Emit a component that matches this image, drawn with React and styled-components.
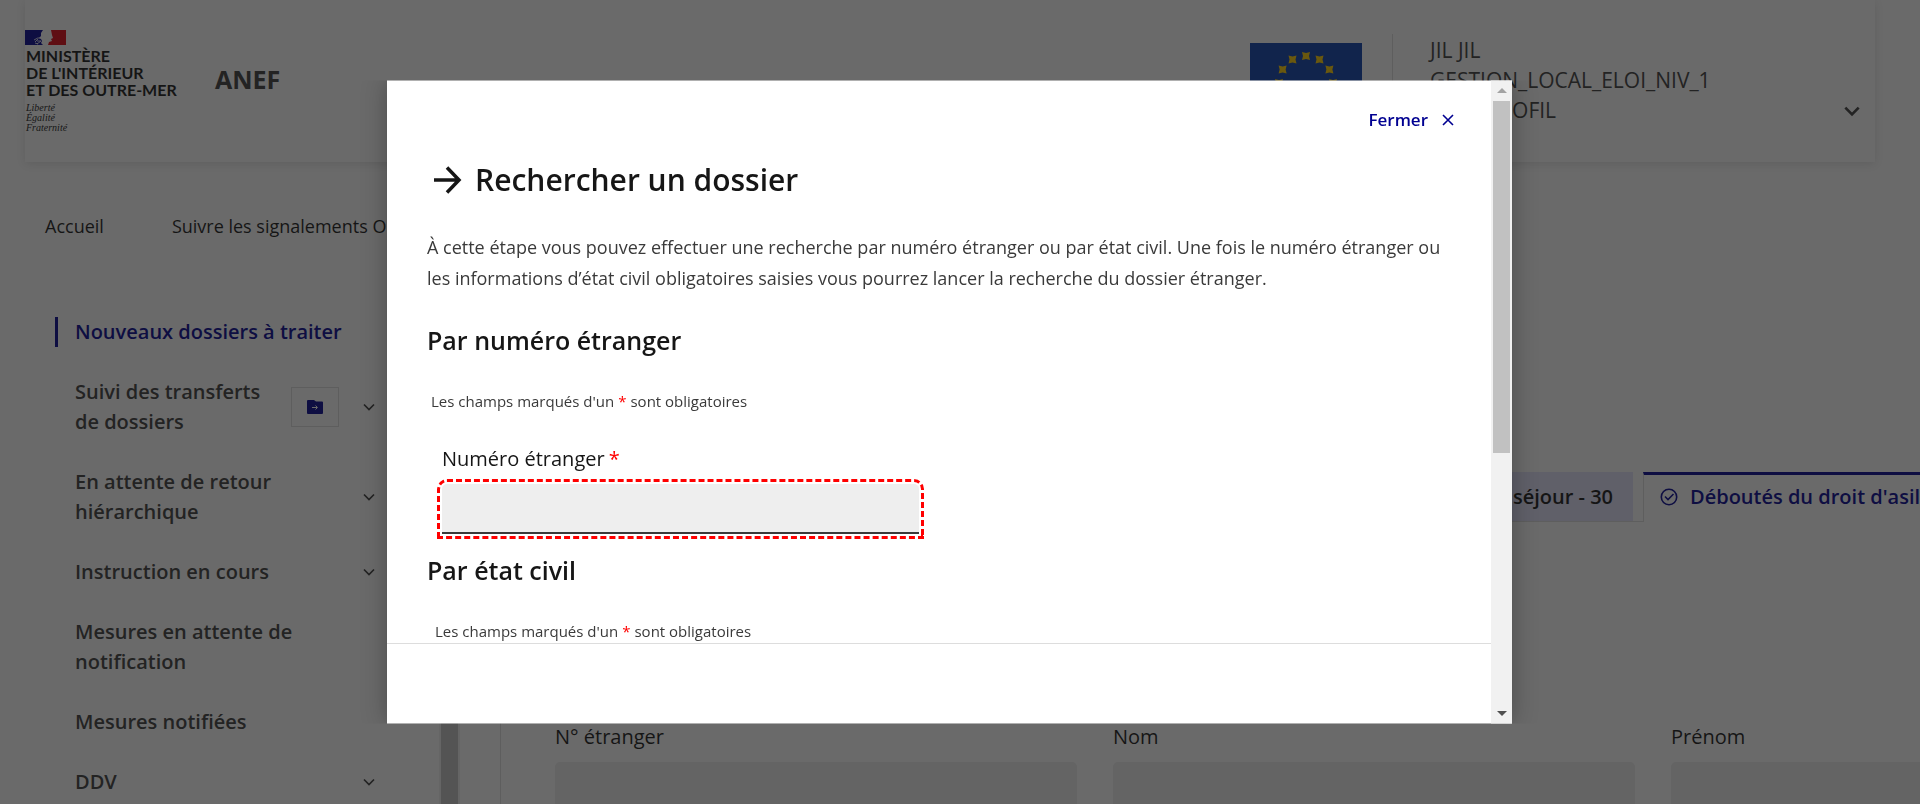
import React from 'react';
import styled, { createGlobalStyle, css } from 'styled-components';

const Global = createGlobalStyle`
  * { box-sizing: border-box; }
  html, body { height: 100%; overflow: hidden; }
  body { margin: 0; background: #fff; color: #3a3a3a; font-family: "Open Sans", "Noto Sans", sans-serif; font-size: 18px; line-height: 30px; }
  h1, h2, p, ul { margin: 0; padding: 0; }
  button, input { font: inherit; color: inherit; border: 0; padding: 0; background: none; border-radius: 0; }
  a { color: inherit; text-decoration: none; }
`;
const Page = styled.div`height: 100vh; overflow: hidden; display: flex; flex-direction: column;`;
const Header = styled.header`
  flex: none; margin: 0 45px 0 25px; height: 162px; display: flex; align-items: flex-start;
  box-shadow: 0 2px 10px rgba(0, 0, 0, 0.13);
`;
const Brand = styled.div`
  flex: none; width: 190px; padding-top: 30px; color: #161616;
  svg { display: block; }
`;
const Ministry = styled.div`padding: 2px 0 0 1px; font-family: Lato, sans-serif; font-size: 16px; font-weight: 700; line-height: 17px; white-space: nowrap;`;
const Motto = styled.div`padding: 5px 0 0 1px; font: italic 10px/10px "Liberation Serif", serif;`;
const Service = styled.div`flex: 1; padding-top: 64px; font-size: 25px; font-weight: 700;`;
const Europe = styled.div`flex: none; padding: 43px 30px 0 0; svg { display: block; }`;
const Account = styled.div`
  flex: none; width: 483px; margin-top: 34px; padding: 1px 15px 0 37px; border-left: 1px solid #ddd;
  display: flex; align-items: flex-end; justify-content: space-between; font-size: 21px;
  button { margin-bottom: 6px; }
`;
const Nav = styled.nav`flex: none; display: flex; gap: 68px; padding: 49px 45px 0; color: #161616; white-space: nowrap;`;
const Columns = styled.div`flex: 1; min-height: 0; display: flex; padding-top: 60px;`;
const Side = styled.nav`flex: none; width: 460px; padding: 16px 0 0 55px; display: flex; overflow: hidden;`;
const Menu = styled.ul`flex: 1; list-style: none; display: flex; flex-direction: column; gap: 30px;`;
const MenuItem = styled.li`
  display: flex; align-items: center; padding-left: 17px; font-size: 20px; font-weight: 600;
  border-left: 3px solid ${p => (p.$active ? '#000091' : 'transparent')};
  color: ${p => (p.$active ? '#000091' : 'inherit')};
  a { flex: none; width: ${p => (p.$active ? '280px' : '216px')}; white-space: pre; }
`;
const Transfer = styled.button`
  width: 48px; height: 40px; border: 1px solid #ddd; color: #000091; display: grid; place-items: center;
`;
const Toggle = styled.button`
  display: grid; place-items: center; width: 16px; height: 16px; margin-left: ${p => (p.$after ? '22px' : '70px')};
`;
const SideBar = styled.div`flex: none; width: 21px; border: solid #f1f1f1; border-width: 0 2px; background: #c1c1c1;`;
const Main = styled.main`flex: 1; min-width: 0; margin-left: 40px; border-left: 1px solid #ddd; overflow: hidden;`;
const Tabs = styled.div`display: flex; justify-content: flex-end; width: 1640px; margin-top: 171px; font-size: 20px; font-weight: 600; white-space: nowrap;`;
const Tab = styled.button`
  height: 50px; padding: 0 20px; display: flex; align-items: center; gap: 12px; color: #161616; background: #e3e3fd;
  background-clip: padding-box; border-bottom: 1px solid #ddd;
  ${p => p.$active && css`width: 498px; padding: 0 16px 3px; color: #000091; background: none; border-top: 3px solid #000091; border-left: 1px solid #ddd; border-bottom: 0;`}
`;
const TabGap = styled.div`width: 10px; height: 50px; border-bottom: 1px solid #ddd;`;
const Fields = styled.div`display: grid; grid-template-columns: repeat(3, 522px); gap: 36px; padding: 200px 0 0 54px;`;
const Field = styled.label`
  display: flex; flex-direction: column; gap: 10px; font-size: 20px; color: #161616;
  input { height: 48px; width: 100%; background: #eee; border-radius: 5px 5px 0 0; }
`;
const Overlay = styled.div`
  position: fixed; inset: 0; padding: 10vh 21px 10vh 0; background: rgba(22, 22, 22, 0.64);
  display: flex; justify-content: center;
`;
const Dialog = styled.div`
  width: 100%; max-width: 1125px; display: flex; background: #fff;
  box-shadow: 0 0 24px rgba(0, 0, 0, 0.3); clip-path: inset(0 -32px);
`;
const DialogMain = styled.div`flex: 1; min-width: 0; display: flex; flex-direction: column;`;
const DialogScroll = styled.div`flex: 1; min-height: 0; overflow: hidden; padding: 24px 35px 0 40px;`;
const Close = styled.button`
  margin: 0 0 0 auto; display: flex; align-items: center; gap: 12px; height: 32px;
  color: #000091; font-weight: 600; font-size: 17px;
`;
const Title = styled.h1`display: flex; align-items: center; gap: 12px; margin: 24px 0 32px 4px; font-size: 30px; font-weight: 600; line-height: 40px; color: #161616;`;
const Intro = styled.p`line-height: 31px;`;
const Heading = styled.h2`margin-top: ${p => (p.$tight ? '18px' : '28px')}; font-size: 25px; font-weight: 600; line-height: 36px; color: #161616;`;
const Hint = styled.p`margin: 29px 0 0 ${p => (p.$inset ? '8px' : '4px')}; font-size: 15px; line-height: 28px;`;
const Star = styled.span`color: #f00; margin: 0 4px;`;
const SearchField = styled.label`
  display: flex; flex-direction: column; gap: 10px; width: 477px; margin: 29px 0 0 15px; font-size: 20px; color: #161616;
  input {
    height: 50px; background: #eee; border-radius: 5px 5px 0 0; box-shadow: inset 0 -2px 0 #3a3a3a;
    outline: 3px dashed #f00; outline-offset: 2px;
  }
`;
const Footer = styled.footer`flex: none; height: 81px; border-top: 1px solid #ddd;`;
const ScrollBar = styled.div`flex: none; width: 21px; display: flex; flex-direction: column; background: #f1f1f1;`;
const ScrollButton = styled.button`height: 21px; display: grid; place-items: center; color: ${p => (p.$off ? '#a3a3a3' : '#505050')};`;
const Track = styled.div`flex: 1; padding: 0 2px;`;
const Thumb = styled.div`height: 58.4%; background: #c1c1c1;`;

const Chevron = ({ size = 12, weight = 2 }) => (
  <svg width={size} height={size} viewBox="0 0 12 12" fill="none" stroke="currentColor" strokeWidth={weight} aria-hidden="true"><path d="M1 3.5 6 8.5 11 3.5" /></svg>
);
const Marianne = () => (
  <svg width="41" height="15" viewBox="0 0 41 15" aria-hidden="true">
    <path fill="#fff" d="M14 0h14v15H14z" />
    <path fill="#000091" d="M0 0h18l-2 3v3l-2 2 2 1 1 2-1 2 2 2H0z" />
    <path fill="#e1000f" d="M26 0h15v15H23l1-3 3-1-1-2 2-1-1-3z" />
    <path stroke="#fff" strokeWidth="0.800" fill="none" d="M9 10q4-3 7-2M10 12l3-3m-1 5 4-3m-6 2 3 1m-1-3h4" />
  </svg>
);
const STAR_POINTS = [[0, -3], [4, -4], [3, 0], [4, 4], [0, 3], [-4, 4], [-3, 0], [-4, -4]];
const star = (cx, cy) =>
  STAR_POINTS.map(([x, y], i) => `${i ? 'L' : 'M'}${(cx + x).toFixed(2)} ${(cy + y).toFixed(2)}`).join('') + 'Z';
const Flag = () => (
  <svg width="112" height="75" viewBox="0 0 112 75" aria-hidden="true">
    <path fill="#0a3dac" d="M0 0h112v75H0z" />
    {Array.from({ length: 12 }, (_, i) => (
      <path key={i} fill="#fc0" d={star(56 + 27 * Math.sin((i * Math.PI) / 6), 40 - 27 * Math.cos((i * Math.PI) / 6))} />
    ))}
  </svg>
);
const items = [
  { label: 'Nouveaux dossiers à traiter', active: true },
  { label: 'Suivi des transferts\nde dossiers', transfer: true, toggle: true },
  { label: 'En attente de retour\nhiérarchique', toggle: true },
  { label: 'Instruction en cours', toggle: true },
  { label: 'Mesures en attente de\nnotification' },
  { label: 'Mesures notifiées' },
  { label: 'DDV', toggle: true },
];
const Required = ({ inset }) => <Hint $inset={inset}>Les champs marqués d'un<Star>*</Star>sont obligatoires</Hint>;

export default function App() {
  return (
    <>
      <Global />
      <Page>
        <Header>
          <Brand>
            <Marianne />
            <Ministry>MINISTÈRE<br />DE L'INTÉRIEUR<br />ET DES OUTRE-MER</Ministry>
            <Motto>Liberté<br />Égalité<br />Fraternité</Motto>
          </Brand>
          <Service>ANEF</Service>
          <Europe><Flag /></Europe>
          <Account>
            <div>JIL JIL<br />GESTION_LOCAL_ELOI_NIV_1<br />MON PROFIL</div>
            <Toggle aria-label="Profil"><Chevron size={16} /></Toggle>
          </Account>
        </Header>
        <Nav>
          <a href="#accueil">Accueil</a>
          <a href="#signalements">Suivre les signalements O</a>
        </Nav>
        <Columns>
          <Side>
            <Menu>
              {items.map(it => (
                <MenuItem key={it.label} $active={it.active}>
                  <a href="#dossiers">{it.label}</a>
                  {it.transfer && (
                    <Transfer aria-label="Transférer">
                      <svg width="16" height="14" viewBox="0 0 16 14" aria-hidden="true">
                        <path fill="currentColor" d="M1 0h6l2 1.500h6a1 1 0 0 1 1 1V13a1 1 0 0 1-1 1H1a1 1 0 0 1-1-1V1a1 1 0 0 1 1-1z" />
                        <path stroke="#fff" fill="none" d="M5 7.500h5M8.500 5.500l2 2-2 2" />
                      </svg>
                    </Transfer>
                  )}
                  {it.toggle && <Toggle $after={it.transfer} aria-label="Déplier"><Chevron weight={1.7} /></Toggle>}
                </MenuItem>
              ))}
            </Menu>
            <SideBar />
          </Side>
          <Main>
            <Tabs>
              <Tab>séjour - 30</Tab>
              <TabGap />
              <Tab $active>
                <svg width="18" height="18" viewBox="0 0 18 18" fill="none" stroke="currentColor" strokeWidth="1.600" aria-hidden="true"><circle cx="9" cy="9" r="7.700" /><path d="M5 8.500 8 11.500 13.500 6" /></svg>
                Déboutés du droit d'asile
              </Tab>
            </Tabs>
            <Fields>
              <Field>N° étranger<input /></Field>
              <Field>Nom<input /></Field>
              <Field>Prénom<input /></Field>
            </Fields>
          </Main>
        </Columns>
      </Page>
      <Overlay>
        <Dialog role="dialog" aria-modal="true" aria-labelledby="dialog-title">
          <DialogMain>
            <DialogScroll>
              <Close>
                Fermer
                <svg width="16" height="16" viewBox="0 0 16 16" stroke="currentColor" strokeWidth="1.600" aria-hidden="true"><path d="m3 3 10 10M13 3 3 13" /></svg>
              </Close>
              <Title id="dialog-title">
                <svg width="32" height="32" viewBox="0 0 32 32" fill="none" stroke="currentColor" strokeWidth="3.500" aria-hidden="true"><path d="M3 16h24M16 3.500l12 12.500-12 12.500" /></svg>
                Rechercher un dossier
              </Title>
              <Intro>À cette étape vous pouvez effectuer une recherche par numéro étranger ou par état civil. Une fois le numéro étranger ou les informations d’état civil obligatoires saisies vous pourrez lancer la recherche du dossier étranger.</Intro>
              <Heading>Par numéro étranger</Heading>
              <Required />
              <SearchField><span>Numéro étranger<Star>*</Star></span><input type="text" required /></SearchField>
              <Heading $tight>Par état civil</Heading>
              <Required inset />
            </DialogScroll>
            <Footer />
          </DialogMain>
          <ScrollBar>
            <ScrollButton $off aria-label="Défiler vers le haut"><svg width="10" height="5" aria-hidden="true"><path fill="currentColor" d="M5 0l5 5H0z" /></svg></ScrollButton>
            <Track><Thumb /></Track>
            <ScrollButton aria-label="Défiler vers le bas"><svg width="10" height="5" aria-hidden="true"><path fill="currentColor" d="M0 0h10L5 5z" /></svg></ScrollButton>
          </ScrollBar>
        </Dialog>
      </Overlay>
    </>
  );
}
